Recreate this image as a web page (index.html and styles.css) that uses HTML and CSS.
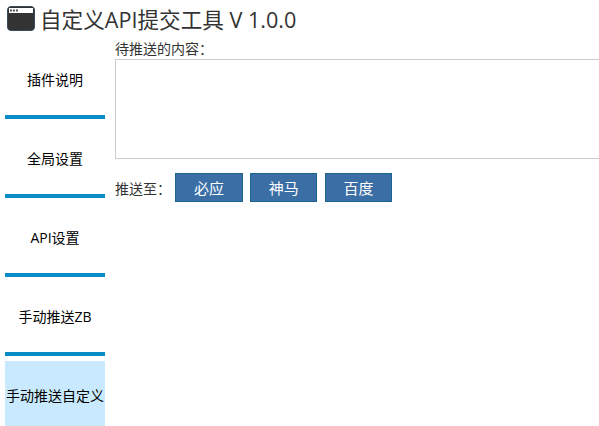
FILE: index.html
```html
<!DOCTYPE html>
<html lang="zh-CN">
<head>
    <meta charset="UTF-8">
    <title>自定义API提交工具</title>
    <link rel="stylesheet" href="styles.css">
</head>
<body>
    <h1 class="title">
        <svg class="app-icon" width="28" height="25" viewBox="0 0 28 25">
            <rect x="0.5" y="0.5" width="27" height="24" rx="3.5" fill="#333" stroke="#3a4a5c"/>
            <rect x="2" y="2" width="24" height="5" fill="#fff"/>
            <rect x="3" y="3.5" width="2" height="2" fill="#555"/>
            <rect x="6" y="3.5" width="2" height="2" fill="#555"/>
            <rect x="9" y="3.5" width="2" height="2" fill="#555"/>
        </svg>
        <span>自定义API提交工具 V 1.0.0</span>
    </h1>

    <div class="main">
        <ul class="tabs">
            <li class="tab">插件说明</li>
            <li class="tab">全局设置</li>
            <li class="tab">API设置</li>
            <li class="tab">手动推送ZB</li>
            <li class="tab active">手动推送自定义</li>
        </ul>

        <div class="panel">
            <label class="field-label" for="content">待推送的内容：</label>
            <textarea class="content-box" id="content"></textarea>
            <div class="push-row">
                <span class="push-label">推送至：</span>
                <button class="push-btn">必应</button>
                <button class="push-btn">神马</button>
                <button class="push-btn">百度</button>
            </div>
        </div>
    </div>
</body>
</html>
```

FILE: styles.css
```css
html, body {
    height: 426px;
    overflow: hidden;
}
body {
    margin: 0;
    background: #fff;
    font-family: "Open Sans", "Noto Sans CJK SC", sans-serif;
    color: #333;
}
.title {
    display: flex;
    align-items: center;
    gap: 5px;
    height: 40px;
    margin: 0;
    padding: 0 0 3px 7px;
    box-sizing: border-box;
    font-size: 21.6px;
    font-weight: normal;
}
.main {
    display: flex;
}
.tabs {
    width: 100px;
    flex-shrink: 0;
    margin: 5px 0 0 5px;
    padding: 0;
    list-style: none;
}
.tab {
    height: 70px;
    line-height: 69px;
    margin-bottom: 5px;
    border-bottom: 4px solid #0a8cc6;
    font-size: 14px;
    text-align: center;
    color: #000;
    white-space: nowrap;
}
.tab.active {
    background: #c9eafe;
    border-bottom: none;
}
.panel {
    flex: 1;
    min-width: 0;
    margin-left: 10px;
    overflow: hidden;
}
.field-label {
    display: block;
    height: 19px;
    line-height: 17px;
    font-size: 14px;
}
.content-box {
    display: block;
    box-sizing: border-box;
    width: 520px;
    height: 100px;
    padding: 0;
    border: 1px solid #ccc;
    resize: none;
}
.push-row {
    display: flex;
    align-items: center;
    gap: 7.4px;
    margin-top: 14px;
}
.push-label {
    flex-shrink: 0;
    width: 52.8px;
    font-size: 14px;
    white-space: nowrap;
}
.push-btn {
    flex-shrink: 0;
    width: 67.4px;
    height: 29px;
    padding: 0;
    background: #3a6ea5;
    border: 1px solid #1a6490;
    color: #fff;
    font-family: inherit;
    font-size: 15px;
}
```
